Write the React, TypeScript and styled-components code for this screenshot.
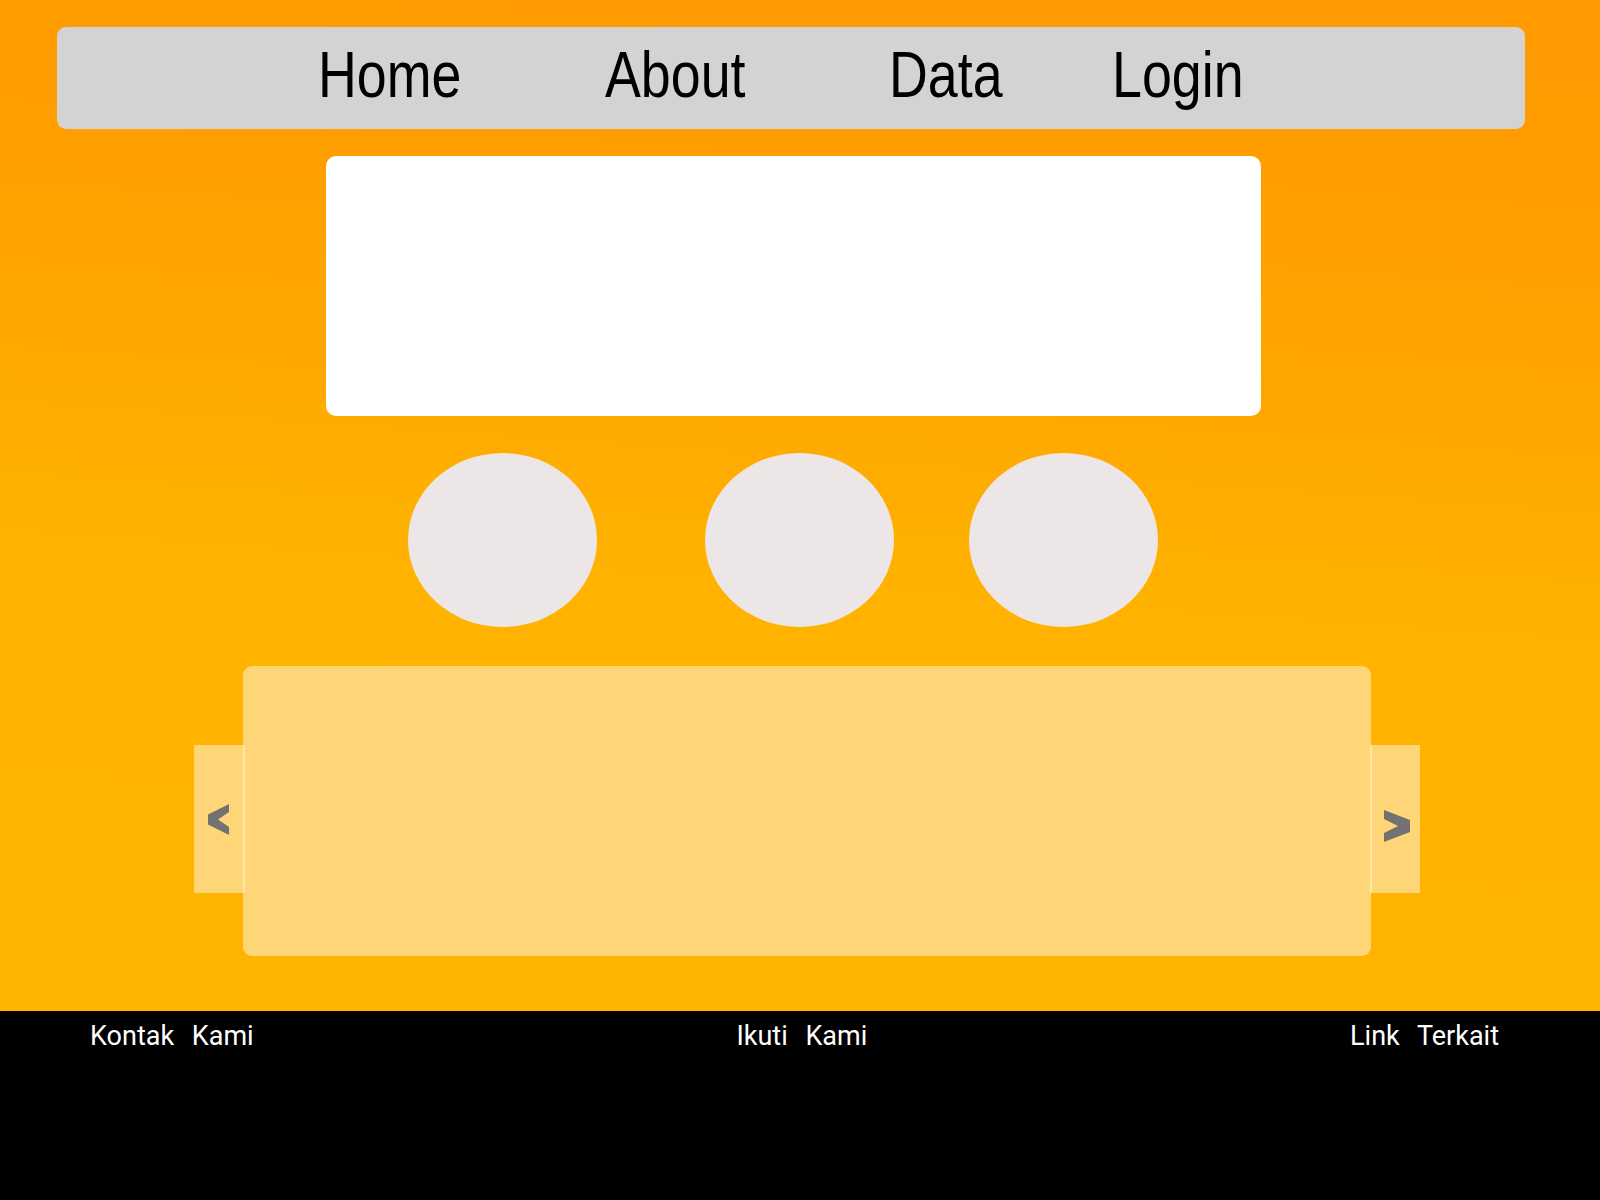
import React from "react";
import styled, { createGlobalStyle } from "styled-components";

const Global = createGlobalStyle`
  html, body { margin: 0; padding: 0; }
  body { font-family: "Liberation Sans", Arial, sans-serif; }
`;

const Page = styled.div`
  min-height: 100vh;
  display: flex;
  flex-direction: column;
  background: linear-gradient(184deg, #ff9a00 0%, #ff9d00 14%, #ffa600 32%, #ffb300 50%, #ffb500 100%);
`;

const Main = styled.main`
  padding-top: 27px;
  display: flex;
  flex-direction: column;
`;

const Nav = styled.nav`
  margin: 0 75px 0 57px;
  height: 102px;
  background: #d3d3d3;
  border-radius: 9px;
  display: flex;
  align-items: center;
  padding-left: 261px;
  box-sizing: border-box;
`;

const NavLink = styled.a<{ $w?: number }>`
  display: block;
  width: ${(p) => (p.$w ? `${p.$w}px` : "auto")};
  font-family: "Liberation Sans", Arial, sans-serif;
  font-size: 64px;
  line-height: 1;
  color: #000;
  text-decoration: none;
  margin-top: -6px;
  white-space: nowrap;
`;

const NavText = styled.span`
  display: inline-block;
  transform: scaleX(0.84);
  transform-origin: left center;
`;

const Hero = styled.section`
  margin: 27px 0 0 326px;
  width: 935px;
  height: 260px;
  background: #ffffff;
  border-radius: 10px;
`;

const CircleRow = styled.div`
  margin-top: 37px;
  padding-left: 408px;
  display: flex;
`;

const Circle = styled.div<{ $ml?: number }>`
  width: 189px;
  height: 174px;
  border-radius: 50%;
  background: #ece6e6;
  margin-left: ${(p) => p.$ml ?? 0}px;
`;

const SliderRow = styled.div`
  margin-top: 39px;
  padding-left: 194px;
  display: flex;
  align-items: flex-start;
`;

const SlidePanel = styled.div`
  width: 1128px;
  height: 290px;
  background: #ffd677;
  border-radius: 9px;
  flex-shrink: 0;
`;

const ArrowButton = styled.button<{ $side: "left" | "right" }>`
  flex-shrink: 0;
  margin-top: 79px;
  height: 148px;
  width: ${(p) => (p.$side === "left" ? 51 : 50)}px;
  padding: 0;
  background: #ffd677;
  border: none;
  ${(p) =>
    p.$side === "left"
      ? "border-right: 2px solid #ffe7a4; margin-right: -2px;"
      : "border-left: 2px solid #ffe7a4; margin-left: -1px;"}
  box-sizing: border-box;
  display: flex;
  align-items: center;
  position: relative;
  z-index: 1;
  cursor: pointer;
`;

const Chevron = styled.svg<{ $left: number; $dy: number }>`
  margin-left: ${(p) => p.$left}px;
  transform: translateY(${(p) => p.$dy}px);
  display: block;
`;

const Footer = styled.footer`
  flex: 1;
  margin-top: 55px;
  background: #000;
  display: flex;
  justify-content: space-between;
  align-items: flex-start;
  padding: 9px 101px 0 90px;
`;

const FooterTitle = styled.div`
  font-family: Roboto, "Liberation Sans", sans-serif;
  font-size: 27px;
  color: #ffffff;
  word-spacing: 11px;
  white-space: nowrap;
`;

export default function App() {
  return (
    <>
      <Global />
      <Page>
        <Main>
          <Nav>
            <NavLink $w={287}><NavText>Home</NavText></NavLink>
            <NavLink $w={284}><NavText>About</NavText></NavLink>
            <NavLink $w={223}><NavText>Data</NavText></NavLink>
            <NavLink><NavText>Login</NavText></NavLink>
          </Nav>
          <Hero />
          <CircleRow>
            <Circle />
            <Circle $ml={108} />
            <Circle $ml={75} />
          </CircleRow>
          <SliderRow>
            <ArrowButton $side="left" aria-label="previous">
              <Chevron $left={14} $dy={0} width="21" height="31" viewBox="0 0 21 31">
                <polygon points="0,10.5 21,0 21,8 10,15.5 21,23 21,31 0,20.5" fill="#727272" />
              </Chevron>
            </ArrowButton>
            <SlidePanel />
            <ArrowButton $side="right" aria-label="next">
              <Chevron $left={12} $dy={7} width="26" height="32" viewBox="0 0 26 32">
                <polygon points="26,10 0,0 0,9 14,16 0,23 0,32 26,22" fill="#727272" />
              </Chevron>
            </ArrowButton>
          </SliderRow>
        </Main>
        <Footer>
          <FooterTitle>Kontak Kami</FooterTitle>
          <FooterTitle>Ikuti Kami</FooterTitle>
          <FooterTitle>Link Terkait</FooterTitle>
        </Footer>
      </Page>
    </>
  );
}
